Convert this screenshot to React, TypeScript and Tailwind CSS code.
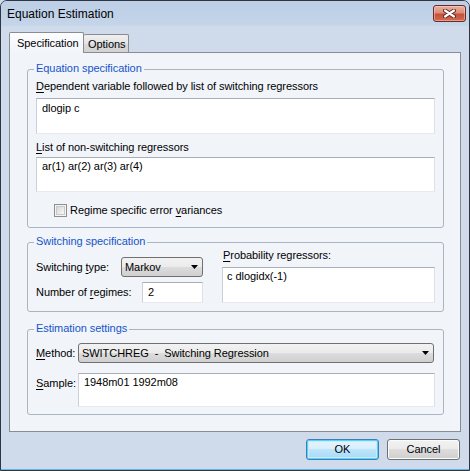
import React from "react";

const U = ({ children }: { children: React.ReactNode }) => (
  <span className="underline decoration-1 underline-offset-[2px]">{children}</span>
);

const boxCls =
  "bg-white border border-[#e6eaf0] border-t-[#a9afb8] border-l-[#ccd1d9] border-r-[#dde1e7]";

const btnGrad = "bg-[linear-gradient(#f2f2f2,#ebebeb_50%,#dddddd_50%,#cfcfcf)]";

function Arrow() {
  return (
    <svg width="7" height="4" viewBox="0 0 7 4" className="shrink-0">
      <path d="M0 0H7L3.5 4Z" fill="#000" />
    </svg>
  );
}

function Group({
  title,
  className,
  children,
}: {
  title: string;
  className: string;
  children: React.ReactNode;
}) {
  return (
    <div className={"relative w-[417px] rounded-[3px] border border-[#aab5c4] " + className}>
      <span className="absolute left-[6px] top-[-8px] bg-[#f1f4f9] px-[2px] leading-[13px] text-[#1554c9]">
        {title}
      </span>
      {children}
    </div>
  );
}

export default function App() {
  return (
    <div className="w-[470px] h-[471px] overflow-hidden bg-[#cfdbeb] font-['Liberation_Sans',Arial,sans-serif] text-[11px] leading-[13px] tracking-[-0.06px] text-black">
      <div className="w-full h-full flex flex-col border border-[#2f3640] rounded-t-[7px] overflow-hidden">
        {/* Title bar */}
        <div className="h-[25px] shrink-0 flex justify-between bg-[linear-gradient(#bccfe6,#c5d5ea)]">
          <span className="pl-[6px] pt-[6px] text-[12px] leading-[14px] tracking-normal text-black">Equation Estimation</span>
          <div className="mt-[4px] mr-[3px] w-[33px] h-[17px] rounded-[3px] border border-[#6b2a22] bg-[linear-gradient(#eab0a2,#dc8d7a_45%,#c6503a_55%,#d06c54)] shadow-[inset_0_0_0_1px_rgba(255,225,215,0.45)] flex items-center justify-center">
            <svg width="13" height="9" viewBox="0 0 13 9">
              <path d="M2 1.5L11 7.5M11 1.5L2 7.5" stroke="#5b2018" strokeWidth="4" strokeLinecap="round" />
              <path d="M2 1.5L11 7.5M11 1.5L2 7.5" stroke="#ffffff" strokeWidth="2.2" strokeLinecap="round" />
            </svg>
          </div>
        </div>

        <div className="px-[8px] flex flex-col shrink-0">
          {/* Tabs */}
          <div className="h-[26px] flex items-end">
            <div className="relative z-10 -mb-px w-[75px] h-[21px] rounded-t-[2px] border border-b-0 border-[#898c95] bg-[linear-gradient(#fdfdfe,#f1f4f9)] pl-[7px] pt-[4px]">
              Specification
            </div>
            <div className="w-[45px] h-[18px] rounded-t-[2px] border border-b-0 border-l-0 border-[#898c95] bg-[linear-gradient(#f0f0f0,#e4e4e4_50%,#d9d9d9_50%,#d2d2d2)] pl-[4px] pt-[3px]">
              Options
            </div>
          </div>

          {/* Panel */}
          <div className="h-[380px] border border-[#898c95] bg-[#f1f4f9] pt-[16px] pl-[17px] flex flex-col">
            <Group title="Equation specification" className="pt-[10px] px-[8px] pb-[10px]">
              <div className="leading-[13px]">
                <U>D</U>ependent variable followed by list of switching regressors
              </div>
              <div className={"mt-[5px] h-[36px] pl-[5px] pt-[3px] " + boxCls}>dlogip c</div>
              <div className="mt-[7px]">
                <U>L</U>ist of non-switching regressors
              </div>
              <div className={"mt-[3px] h-[35px] pl-[5px] pt-[2px] " + boxCls}>ar(1) ar(2) ar(3) ar(4)</div>
              <div className="mt-[12px] h-[13px] flex items-center gap-[3px] pl-[18px]">
                <span className="w-[13px] h-[13px] shrink-0 border border-[#8e8f8f] bg-[#f4f4f4] p-px">
                  <span className="block w-full h-full border border-[#c9c9c9] bg-[linear-gradient(135deg,#d8d8d8,#f7f7f7)]" />
                </span>
                <span>
                  Regime specific error <U>v</U>ariances
                </span>
              </div>
            </Group>

            <Group title="Switching specification" className="mt-[14px] pt-[6px] px-[8px] pb-[8px] flex">
              <div className="w-[167px] shrink-0 mt-[8px] flex flex-col">
                <div className="h-[20px] flex items-center">
                  <span className="w-[85px] shrink-0">
                    Switching <U>t</U>ype:
                  </span>
                  <div className={"w-[82px] h-[20px] rounded-[3px] border border-[#707070] flex items-center justify-between pl-[3px] pr-[4px] " + btnGrad}>
                    <span>Markov</span>
                    <Arrow />
                  </div>
                </div>
                <div className="mt-[5px] h-[21px] flex items-center">
                  <span className="w-[106px] shrink-0">
                    Number of <U>r</U>egimes:
                  </span>
                  <div className={"w-[61px] h-[21px] flex items-center pl-[5px] " + boxCls}>2</div>
                </div>
              </div>
              <div className="ml-[19px] flex-1 flex flex-col">
                <div className="pl-[1px]">
                  <U>P</U>robability regressors:
                </div>
                <div className={"mt-[5px] h-[36px] pl-[4px] pt-[2px] " + boxCls}>c dlogidx(-1)</div>
              </div>
            </Group>

            <Group title="Estimation settings" className="mt-[17px] pt-[13px] px-[8px] pb-[7px]">
              <div className="h-[20px] flex items-center">
                <span className="w-[42px] shrink-0">
                  <U>M</U>ethod:
                </span>
                <div className={"flex-1 mr-px h-[20px] rounded-[3px] border border-[#707070] flex items-center justify-between pl-[3px] pr-[4px] " + btnGrad}>
                  <span className="whitespace-pre">SWITCHREG  -  Switching Regression</span>
                  <Arrow />
                </div>
              </div>
              <div className="mt-[10px] flex items-start">
                <span className="w-[42px] shrink-0 pt-[4px]">
                  <U>S</U>ample:
                </span>
                <div className={"flex-1 h-[34px] pl-[5px] pt-[2px] " + boxCls}>1948m01 1992m08</div>
              </div>
            </Group>
          </div>
        </div>

        {/* Buttons */}
        <div className="mt-[7px] shrink-0 flex justify-end gap-[8px] pr-[9px]">
          <button className="w-[73px] h-[21px] rounded-[3px] border border-[#3c7fb1] bg-[linear-gradient(#e5f4fc,#d7effc_50%,#bde6fd_50%,#a6d9f4)] shadow-[inset_0_0_0_1px_#5cd0fb,inset_0_0_0_2px_#c4ecfd] text-[11px] leading-[13px] text-black">
            OK
          </button>
          <button className={"w-[73px] h-[21px] rounded-[3px] border border-[#707070] shadow-[inset_0_0_0_1px_#fbfbfb] text-[11px] leading-[13px] text-black " + btnGrad}>
            Cancel
          </button>
        </div>

        <div className="mt-auto h-px shrink-0 bg-[#5fb6e6]" />
      </div>
    </div>
  );
}
